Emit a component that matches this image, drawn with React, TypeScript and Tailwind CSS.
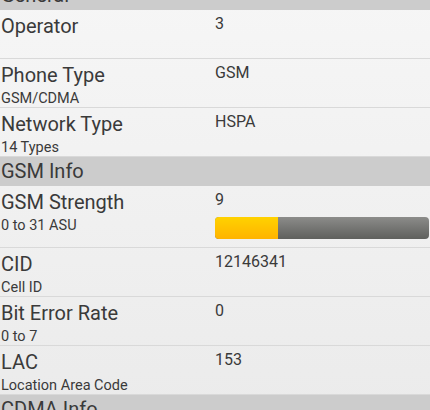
import React from "react";

type Row = { title: string; sub?: string; value: string; bar?: number };

function Header({ label }: { label: string }) {
  return (
    <div className="h-[29px] bg-[#cccccc] text-[#3a3a3a] text-[20px] leading-[29px] pl-[1px]">
      {label}
    </div>
  );
}

function ItemRow({ r }: { r: Row }) {
  return (
    <div className="flex border-b border-[#d9d9d9] min-h-[49px]">
      <div className="w-[215px] shrink-0 pt-[4px] pl-[1px]">
        <div className="text-[20px] leading-[24px] text-[#3a3a3a]">{r.title}</div>
        {r.sub && (
          <div className="text-[14.5px] leading-[17px] mt-[3px] text-[#3a3a3a]">{r.sub}</div>
        )}
      </div>
      <div className="flex-1 pt-[4px]">
        <div className="text-[16px] leading-[20px] text-[#3a3a3a]">{r.value}</div>
        {r.bar !== undefined && (
          <div className="mt-[7px] mb-[8px] mr-[1px] h-[22px] rounded-[4px] overflow-hidden flex bg-gradient-to-b from-[#8c8c8a] to-[#5f605d]">
            <div
              className="h-full bg-gradient-to-b from-[#ffd200] to-[#ffb300]"
              style={{ width: `${r.bar * 100}%` }}
            />
          </div>
        )}
      </div>
    </div>
  );
}

export default function App() {
  const general: Row[] = [
    { title: "Operator", value: "3" },
    { title: "Phone Type", sub: "GSM/CDMA", value: "GSM" },
    { title: "Network Type", sub: "14 Types", value: "HSPA" },
  ];
  const gsm: Row[] = [
    { title: "GSM Strength", sub: "0 to 31 ASU", value: "9", bar: 63 / 214 },
    { title: "CID", sub: "Cell ID", value: "12146341" },
    { title: "Bit Error Rate", sub: "0 to 7", value: "0" },
    { title: "LAC", sub: "Location Area Code", value: "153" },
  ];
  return (
    <div
      className="w-[430px] h-[410px] overflow-hidden bg-gradient-to-b from-[#f6f6f6] to-[#ebebeb]"
      style={{ fontFamily: "Roboto, 'Noto Sans', sans-serif" }}
    >
      <div className="-mt-[19px]">
        <Header label="General" />
        {general.map((r) => (
          <ItemRow key={r.title} r={r} />
        ))}
        <Header label="GSM Info" />
        {gsm.map((r) => (
          <ItemRow key={r.title} r={r} />
        ))}
        <Header label="CDMA Info" />
      </div>
    </div>
  );
}
